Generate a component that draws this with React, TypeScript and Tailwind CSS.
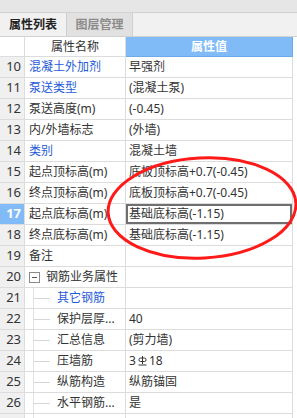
import React from "react";

type Row = {
  no: number;
  name: string;
  value?: React.ReactNode;
  blue?: boolean;
  tree?: "root" | "child";
  active?: boolean;
  hideNo?: boolean;
};

const rows: Row[] = [
  { no: 10, name: "混凝土外加剂", value: "早强剂", blue: true },
  { no: 11, name: "泵送类型", value: "(混凝土泵)", blue: true },
  { no: 12, name: "泵送高度(m)", value: "(-0.45)" },
  { no: 13, name: "内/外墙标志", value: "(外墙)" },
  { no: 14, name: "类别", value: "混凝土墙", blue: true },
  { no: 15, name: "起点顶标高(m)", value: "底板顶标高+0.7(-0.45)" },
  { no: 16, name: "终点顶标高(m)", value: "底板顶标高+0.7(-0.45)" },
  { no: 17, name: "起点底标高(m)", value: "基础底标高(-1.15)", active: true },
  { no: 18, name: "终点底标高(m)", value: "基础底标高(-1.15)" },
  { no: 19, name: "备注" },
  { no: 20, name: "钢筋业务属性", tree: "root" },
  { no: 21, name: "其它钢筋", tree: "child", blue: true },
  { no: 22, name: "保护层厚...", value: "40", tree: "child" },
  { no: 23, name: "汇总信息", value: "(剪力墙)", tree: "child" },
  { no: 24, name: "压墙筋", value: "rebar", tree: "child" },
  { no: 25, name: "纵筋构造", value: "纵筋锚固", tree: "child" },
  { no: 26, name: "水平钢筋...", value: "是", tree: "child" },
  { no: 27, name: "", tree: "child", hideNo: true },
];

function RebarIcon() {
  return (
    <svg width="9" height="12" viewBox="0 0 9 12" className="mx-[2px] inline-block">
      <line x1="4.5" y1="1" x2="4.5" y2="9" stroke="#333" strokeWidth="1" />
      <rect x="1" y="3" width="7" height="3.5" rx="1.5" fill="none" stroke="#333" strokeWidth="1" />
      <line x1="0.5" y1="10" x2="8.5" y2="10" stroke="#333" strokeWidth="1" />
    </svg>
  );
}

function App() {
  return (
    <div
      className="relative h-[418px] w-[297px] overflow-hidden bg-white text-[12px] text-[#333]"
      style={{ fontFamily: '"Noto Sans", "Noto Sans CJK SC", sans-serif' }}
    >
      <div className="h-[13px] border-b border-[#d2d2d2] bg-[#e6e6e6]" />
      <div className="flex h-[24px] border-b border-[#d2d2d2] bg-[#f1f1f1]">
        <div className="flex w-[67px] items-center justify-center border-r border-[#cfcfcf] bg-[#f1f1f1] font-bold text-[#222]">
          属性列表
        </div>
        <div className="flex w-[66px] items-center justify-center border-r border-[#cfcfcf] bg-[#e1e1e1] font-bold text-[#8c8c8c]">
          图层管理
        </div>
      </div>

      <div className="flex h-[20px]">
        <div className="w-[25px] border-r border-b border-[#dcdcdc] bg-white" />
        <div className="flex w-[101px] items-center justify-center border-r border-b border-[#dcdcdc] bg-white">
          属性名称
        </div>
        <div className="flex w-[167px] items-center justify-center border-r border-b border-[#6ea9ec] bg-[#80bbf8] font-bold text-white">
          属性值
        </div>
      </div>

      {rows.map((row) => (
        <div key={row.no} className="flex h-[21px]">
          <div
            className={
              row.active
                ? "flex w-[25px] items-center justify-end border-r border-b border-[#dcdcdc] bg-[#80bbf8] pr-[3px] text-[13px] font-bold text-white"
                : "flex w-[25px] items-center justify-end border-r border-b border-[#dcdcdc] bg-[#f0f0f0] pr-[3px] text-[13px] text-[#333]"
            }
          >
            {row.hideNo ? "" : row.no}
          </div>
          <div
            className={
              "relative flex w-[101px] items-center overflow-hidden border-r border-b border-[#dcdcdc] whitespace-nowrap " +
              (row.blue ? "text-[#1f5bd6]" : "text-[#333]")
            }
          >
            {row.tree === "root" && (
              <>
                <span className="ml-[4px] flex h-[11px] w-[11px] items-center justify-center border border-[#8a8a8a] bg-white">
                  <span className="h-px w-[5px] bg-[#555]" />
                </span>
                <span className="ml-[6px]">{row.name}</span>
              </>
            )}
            {row.tree === "child" && (
              <>
                <span className="absolute top-[-1px] bottom-[-1px] left-[8px] w-px bg-[#e2e2e2]" />
                <span className="absolute top-1/2 left-[9px] h-px w-[16px] bg-[#d6d6d6]" />
                <span className="ml-[32px]">{row.name}</span>
              </>
            )}
            {!row.tree && <span className="ml-[4px]">{row.name}</span>}
          </div>
          <div
            className={
              row.active
                ? "flex w-[167px] items-center border-r border-b border-[#dcdcdc] whitespace-nowrap"
                : "flex w-[167px] items-center border-r border-b border-[#dcdcdc] pl-[3px] whitespace-nowrap"
            }
          >
            {row.active ? (
              <div className="flex h-full w-full items-center border-2 border-[#6f6f6f] pl-[1px]">{row.value}</div>
            ) : row.value === "rebar" ? (
              <span className="flex items-center">
                3<RebarIcon />18
              </span>
            ) : (
              row.value
            )}
          </div>
        </div>
      ))}

      <svg className="pointer-events-none absolute top-0 left-0" width="297" height="418">
        <ellipse
          cx="202"
          cy="208"
          rx="94"
          ry="50"
          fill="none"
          stroke="#ff1a1a"
          strokeWidth="3"
          transform="rotate(-3 202 208)"
        />
      </svg>
    </div>
  );
}

export default App;
